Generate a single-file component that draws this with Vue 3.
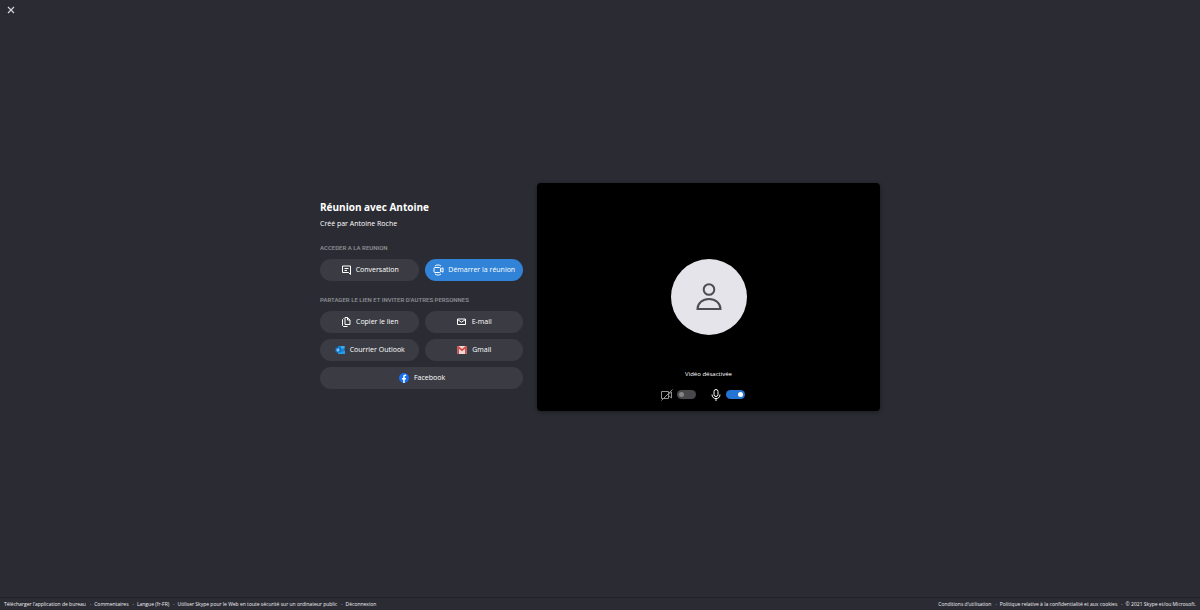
<script setup>
import { ref } from 'vue'

const camera = ref(false)
const microphone = ref(true)

const shareTargets = [
  { id: 'copy', label: 'Copier le lien' },
  { id: 'email', label: 'E-mail' },
  { id: 'outlook', label: 'Courrier Outlook' },
  { id: 'gmail', label: 'Gmail' },
  { id: 'facebook', label: 'Facebook', wide: true }
]

const footerLeft = [
  'Télécharger l’application de bureau',
  'Commentaires',
  'Langue (fr-FR)',
  'Utiliser Skype pour le Web en toute sécurité sur un ordinateur public',
  'Déconnexion'
]
const footerRight = ['Conditions d’utilisation', 'Politique relative à la confidentialité et aux cookies']
</script>

<template>
  <div class="page">
    <button class="close" type="button" aria-label="Fermer">
      <svg viewBox="0 0 8 8" width="8" height="8"><path d="M1 1l6 6M7 1L1 7" stroke="#d4d4d8" stroke-width="1.2" fill="none" /></svg>
    </button>

    <main class="main">
      <div class="lobby">
        <section class="details">
          <h1>Réunion avec Antoine</h1>
          <p class="author">Créé par Antoine Roche</p>

          <h2>ACCEDER A LA REUNION</h2>
          <div class="buttons">
            <button class="pill" type="button">
              <svg viewBox="0 0 12 12" width="12" height="12" fill="none" stroke="#fff" stroke-width="1">
                <path d="M2.500 2h8v8.500l-2-2h-6zM4.500 4.500h4M4.500 6.500h2.500" />
              </svg>
              <span>Conversation</span>
            </button>
            <button class="pill primary" type="button">
              <svg viewBox="0 0 12 12" width="12" height="12" fill="none" stroke="#fff" stroke-width="1">
                <rect x="2" y="3.500" width="6.500" height="5" rx="1" />
                <path d="M8.500 5.500l2.500-1.700v4.400L8.500 6.500M3 2C4.500.6 7.500.6 9 2M3 10c1.500 1.400 4.500 1.400 6 0" />
              </svg>
              <span>Démarrer la réunion</span>
            </button>
          </div>

          <h2>PARTAGER LE LIEN ET INVITER D’AUTRES PERSONNES</h2>
          <div class="buttons">
            <button v-for="t in shareTargets" :key="t.id" class="pill" :class="{ wide: t.wide }" type="button">
              <svg v-if="t.id === 'copy'" viewBox="0 0 12 12" width="12" height="12" fill="none" stroke="#fff" stroke-width="1">
                <path d="M5 1.500h2.500L10 4v4.500H5zM7.500 1.500V4H10M3.500 2.500l-1 1v6l1 1h4" />
              </svg>
              <svg v-else-if="t.id === 'email'" viewBox="0 0 12 12" width="12" height="12" fill="none" stroke="#fff" stroke-width="1">
                <path d="M1.500 3h8v5.500h-8zM1.500 3.500l4 2.700 4-2.700" />
              </svg>
              <svg v-else-if="t.id === 'outlook'" viewBox="0 0 12 12" width="12" height="12">
                <path d="M4 2h6.500v7H4z" fill="#1683d8" />
                <path d="M7 2h3.500v2.500H7z" fill="#42a8e8" />
                <path d="M4 4h3v3H4z" fill="#0a5eaa" />
                <path d="M4 6.500l3.500 1.700L11 6.500V10H4z" fill="#279ce5" />
                <rect x="1.500" y="3.500" width="5" height="5" rx=".6" fill="#0873cf" />
                <ellipse cx="4" cy="6" rx="1" ry="1.200" fill="none" stroke="#d5eaff" stroke-width=".8" />
              </svg>
              <svg v-else-if="t.id === 'gmail'" viewBox="0 0 12 12" width="12" height="12">
                <rect x="1.500" y="2" width="9" height="8" rx=".6" fill="#eed8d8" />
                <path d="M1.500 2V10H3V4.800l3 2.400 3-2.400V10h1.500V2h-1L6 5 2.500 2z" fill="#d64b45" />
              </svg>
              <svg v-else viewBox="0 0 12 12" width="12" height="12">
                <circle cx="6" cy="6" r="5" fill="#176fee" />
                <path d="M5.200 11V7.400H3.900V5.900h1.300V4.800c0-1.400.8-2.200 2-2.200l1 .1V4h-.7c-.6 0-.8.3-.8.8v1.100h1.400l-.2 1.500H6.700V11z" fill="#fff" />
              </svg>
              <span>{{ t.label }}</span>
            </button>
          </div>
        </section>

        <section class="preview">
          <div class="avatar">
            <svg viewBox="0 0 28 28" width="28" height="28" fill="none" stroke="#4c4c52" stroke-width="2">
              <circle cx="14" cy="6.500" r="5.300" />
              <path d="M2.500 26c.2-6 5-10 11.500-10s11.300 4 11.500 10z" />
            </svg>
          </div>
          <p class="status">Vidéo désactivée</p>
          <div class="controls">
            <label>
              <svg viewBox="0 0 12 12" width="12" height="12" fill="none" stroke="#929292" stroke-width="1">
                <path d="M.500 2.500h7v7h-7zM7.500 5.500l3-2.500v6l-3-2.500M.5 11.500L11.500.5" />
              </svg>
              <input v-model="camera" type="checkbox" role="switch" aria-label="Caméra" />
            </label>
            <label>
              <svg viewBox="0 0 12 12" width="12" height="12" fill="none" stroke="#fff" stroke-width="1">
                <rect x="4" y=".5" width="4" height="7" rx="2" />
                <path d="M2 5.500C2 11 10 11 10 5.500M6 9.500v2.500" />
              </svg>
              <input v-model="microphone" type="checkbox" role="switch" aria-label="Microphone" />
            </label>
          </div>
        </section>
      </div>
    </main>

    <footer class="footer">
      <ul>
        <li v-for="item in footerLeft" :key="item"><a href="#">{{ item }}</a></li>
      </ul>
      <ul>
        <li v-for="item in footerRight" :key="item"><a href="#">{{ item }}</a></li>
        <li>© 2021 Skype et/ou Microsoft.</li>
      </ul>
    </footer>
  </div>
</template>

<style>
body {
  background: #2b2c33;
}
</style>

<style scoped>
.page {
  position: relative;
  display: flex;
  flex-direction: column;
  min-height: 100vh;
  background: #2b2c33;
  color: #fff;
  font-family: "Open Sans", "Noto Sans", sans-serif;
}
button {
  border: 0;
  padding: 0;
  color: inherit;
  font-family: inherit;
  cursor: pointer;
}
svg {
  display: block;
  flex: none;
}
.close {
  position: absolute;
  top: 4px;
  left: 5px;
  padding: 2px;
  background: none;
}
.main {
  flex: 1;
  display: flex;
  align-items: center;
  justify-content: center;
  padding-bottom: 4px;
}
.lobby {
  display: grid;
  grid-template-columns: 203fr 343fr;
  gap: 14px;
  align-items: center;
  width: 100%;
  max-width: 560px;
}
.details {
  padding-bottom: 6px;
}
h1 {
  margin: 0;
  font-size: 10px;
  line-height: 16px;
  font-weight: 700;
}
.author {
  margin: 4px 0 0;
  font-size: 7px;
  line-height: 10px;
}
h2 {
  margin: 14px 0 6px;
  font-family: Roboto, "Open Sans", sans-serif;
  font-size: 6px;
  line-height: 10px;
  font-weight: 600;
  color: #8b8c93;
  white-space: nowrap;
}
.buttons {
  display: grid;
  grid-template-columns: 1fr 1fr;
  gap: 6px;
}
.pill {
  display: flex;
  align-items: center;
  justify-content: center;
  gap: 4px;
  height: 22px;
  border-radius: 11px;
  background: #3b3c43;
  font-size: 7px;
  line-height: 10px;
  white-space: nowrap;
}
.primary {
  background: #3183d8;
}
.wide {
  grid-column: 1 / -1;
}
.preview {
  display: flex;
  flex-direction: column;
  align-items: center;
  padding: 76px 0 10px;
  border-radius: 4px;
  background: #000;
  box-shadow: 0 1px 4px rgba(0, 0, 0, 0.4);
}
.avatar {
  display: flex;
  align-items: center;
  justify-content: center;
  width: 76px;
  height: 76px;
  border-radius: 50%;
  background: #e5e4ea;
}
.status {
  margin: 34px 0 10px;
  font-size: 6px;
  line-height: 10px;
}
.controls {
  display: flex;
  padding-left: 2px;
}
.controls label {
  display: flex;
  align-items: center;
  gap: 4px;
  margin-right: 14px;
}
input {
  appearance: none;
  display: flex;
  align-items: center;
  width: 19px;
  height: 9px;
  margin: 0;
  padding: 0 2px;
  box-sizing: border-box;
  border-radius: 5px;
  background: #48484a;
}
input::before {
  content: "";
  width: 5px;
  height: 5px;
  border-radius: 50%;
  background: #858587;
}
input:checked {
  justify-content: flex-end;
  background: #2474d3;
}
input:checked::before {
  background: #fff;
}
.footer {
  display: flex;
  justify-content: space-between;
  padding: 2px 4px;
  border-top: 1px solid #222329;
  font-size: 5px;
  line-height: 8px;
  color: #f0f0f4;
}
.footer ul {
  display: flex;
  margin: 0;
  padding: 0;
  list-style: none;
}
.footer li + li::before {
  content: "·";
  padding: 0 3px 0 4px;
}
.footer a {
  color: inherit;
  text-decoration: none;
}
</style>
